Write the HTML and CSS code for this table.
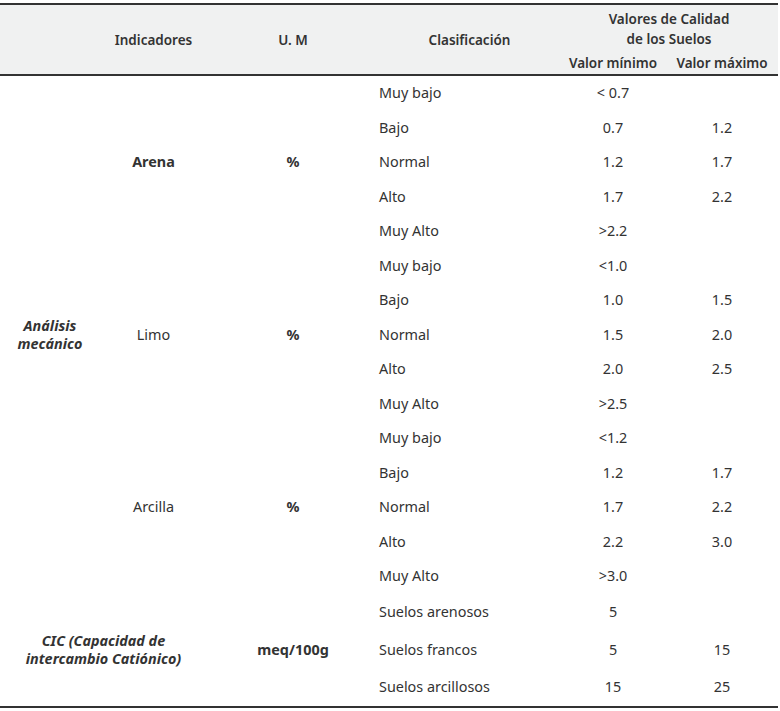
FILE: index.html
```html
<!DOCTYPE html>
<html lang="es">
<head>
<meta charset="utf-8">
<title>Valores de Calidad de los Suelos</title>
<link rel="stylesheet" href="styles.css">
</head>
<body>
<table class="soil">
  <colgroup>
    <col class="c1"><col class="c2"><col class="c3"><col class="c4"><col class="c5"><col class="c6">
  </colgroup>
  <thead>
    <tr class="h1">
      <th rowspan="2"></th>
      <th rowspan="2">Indicadores</th>
      <th rowspan="2">U. M</th>
      <th rowspan="2" class="hclas">Clasificación</th>
      <th colspan="2" class="hval">Valores de Calidad<br>de los Suelos</th>
    </tr>
    <tr class="h2">
      <th>Valor mínimo</th>
      <th>Valor máximo</th>
    </tr>
  </thead>
  <tbody>
    <tr class="r">
      <td rowspan="15" class="cat">Análisis<br>mecánico</td>
      <td rowspan="5" class="ind b">Arena</td>
      <td rowspan="5" class="um">%</td>
      <td class="cl">Muy bajo</td><td class="v">&lt; 0.7</td><td class="v"></td>
    </tr>
    <tr class="r"><td class="cl">Bajo</td><td class="v">0.7</td><td class="v">1.2</td></tr>
    <tr class="r"><td class="cl">Normal</td><td class="v">1.2</td><td class="v">1.7</td></tr>
    <tr class="r"><td class="cl">Alto</td><td class="v">1.7</td><td class="v">2.2</td></tr>
    <tr class="r"><td class="cl">Muy Alto</td><td class="v">&gt;2.2</td><td class="v"></td></tr>
    <tr class="r">
      <td rowspan="5" class="ind">Limo</td>
      <td rowspan="5" class="um">%</td>
      <td class="cl">Muy bajo</td><td class="v">&lt;1.0</td><td class="v"></td>
    </tr>
    <tr class="r"><td class="cl">Bajo</td><td class="v">1.0</td><td class="v">1.5</td></tr>
    <tr class="r"><td class="cl">Normal</td><td class="v">1.5</td><td class="v">2.0</td></tr>
    <tr class="r"><td class="cl">Alto</td><td class="v">2.0</td><td class="v">2.5</td></tr>
    <tr class="r"><td class="cl">Muy Alto</td><td class="v">&gt;2.5</td><td class="v"></td></tr>
    <tr class="r">
      <td rowspan="5" class="ind">Arcilla</td>
      <td rowspan="5" class="um">%</td>
      <td class="cl">Muy bajo</td><td class="v">&lt;1.2</td><td class="v"></td>
    </tr>
    <tr class="r"><td class="cl">Bajo</td><td class="v">1.2</td><td class="v">1.7</td></tr>
    <tr class="r"><td class="cl">Normal</td><td class="v">1.7</td><td class="v">2.2</td></tr>
    <tr class="r"><td class="cl">Alto</td><td class="v">2.2</td><td class="v">3.0</td></tr>
    <tr class="r"><td class="cl">Muy Alto</td><td class="v">&gt;3.0</td><td class="v"></td></tr>
    <tr class="rc">
      <td rowspan="3" colspan="2" class="cat">CIC (Capacidad de<br>intercambio Catiónico)</td>
      <td rowspan="3" class="um meq">meq/100g</td>
      <td class="cl">Suelos arenosos</td><td class="v">5</td><td class="v"></td>
    </tr>
    <tr class="rc"><td class="cl">Suelos francos</td><td class="v">5</td><td class="v">15</td></tr>
    <tr class="rc"><td class="cl">Suelos arcillosos</td><td class="v">15</td><td class="v">25</td></tr>
  </tbody>
</table>
</body>
</html>
```

FILE: styles.css
```css
html, body {
  margin: 0;
  padding: 0;
  background: #ffffff;
}

body {
  font-family: "Noto Sans", "Open Sans", "DejaVu Sans", sans-serif;
  font-size: 13.5px;
  color: #333333;
}

.soil {
  margin-top: 3px;
  width: 778px;
  border-collapse: collapse;
  table-layout: fixed;
  border-top: 2px solid #333333;
  border-bottom: 2px solid #333333;
}

.c1 { width: 100px; }
.c2 { width: 107px; }
.c3 { width: 172px; }
.c4 { width: 181px; }
.c5 { width: 106px; }
.c6 { width: 112px; }

.soil thead {
  background: #f0f1f1;
  border-bottom: 2px solid #333333;
}

.soil th {
  font-weight: 600;
  text-align: center;
  padding: 0;
  line-height: 20px;
  white-space: nowrap;
}

.h1 th.hval {
  height: 47px;
  vertical-align: middle;
}

.h2 th {
  height: 22px;
  vertical-align: middle;
}

.hclas {
  padding-right: 7px;
}

.soil td {
  padding: 0;
  font-size: 14.4px;
  line-height: 18px;
  vertical-align: middle;
}

.r td { height: 34.5px; }
.rc td { height: 37.5px; }

.cat {
  text-align: center;
  font-weight: 700;
  font-style: italic;
}

.ind {
  text-align: center;
}

.b { font-weight: 700; }

.um {
  text-align: center;
  font-weight: 700;
}

.meq {
  padding-right: 18px;
}

.cl {
  text-align: left;
  padding-left: 3px;
}

.v {
  text-align: center;
}
```
